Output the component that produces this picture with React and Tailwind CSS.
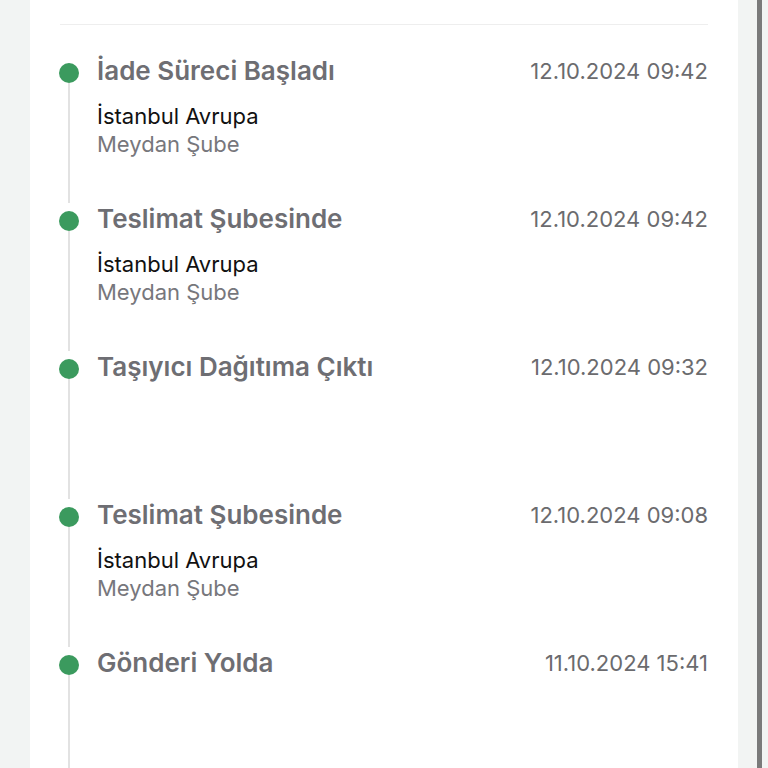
import React from "react";

const events = [
  { title: "İade Süreci Başladı", date: "12.10.2024 09:42", city: "İstanbul Avrupa", branch: "Meydan Şube" },
  { title: "Teslimat Şubesinde", date: "12.10.2024 09:42", city: "İstanbul Avrupa", branch: "Meydan Şube" },
  { title: "Taşıyıcı Dağıtıma Çıktı", date: "12.10.2024 09:32" },
  { title: "Teslimat Şubesinde", date: "12.10.2024 09:08", city: "İstanbul Avrupa", branch: "Meydan Şube" },
  { title: "Gönderi Yolda", date: "11.10.2024 15:41" },
];

function TimelineItem({ item }) {
  return (
    <div className="flex h-[148px]">
      {/* DOT + LINE */}
      <div className="w-[20px] flex flex-col items-center">
        <div className="mt-[8px] w-[20px] h-[20px] rounded-full bg-[#3b9a5e] shrink-0" />
        <div className="flex-1 w-[2px] bg-[#e2e2e2]" />
      </div>

      <div className="flex-1 ml-[18px]">
        <div className="flex items-center justify-between">
          <span className="text-[26px] leading-[32px] font-semibold text-[#6e6e73]">{item.title}</span>
          <span className="text-[22px] leading-[32px] text-[#6b6b6e]">{item.date}</span>
        </div>
        {item.city && (
          <div className="mt-[15px] text-[22px] leading-[28px]">
            <div className="text-[#111111]">{item.city}</div>
            <div className="text-[#77777c]">{item.branch}</div>
          </div>
        )}
      </div>
    </div>
  );
}

export default function App() {
  return (
    <div className="w-[768px] h-[768px] overflow-hidden flex bg-[#f2f4f3]" style={{ fontFamily: "Inter, 'Noto Sans', sans-serif" }}>
      <div className="w-[30px] shrink-0" />

      {/* CARD */}
      <div className="flex-1 bg-white pl-[29px] pr-[30px]">
        <div className="mt-[24px] ml-[1px] h-[1px] bg-[#eeeeee]" />
        <div className="mt-[30px]">
          {events.map((e, i) => (
            <TimelineItem key={i} item={e} />
          ))}
        </div>
      </div>

      {/* SCROLLBAR GUTTER */}
      <div className="w-[30px] shrink-0 flex">
        <div className="ml-[19px] w-[5px] h-full bg-[#7a7a7a]" />
      </div>
    </div>
  );
}
